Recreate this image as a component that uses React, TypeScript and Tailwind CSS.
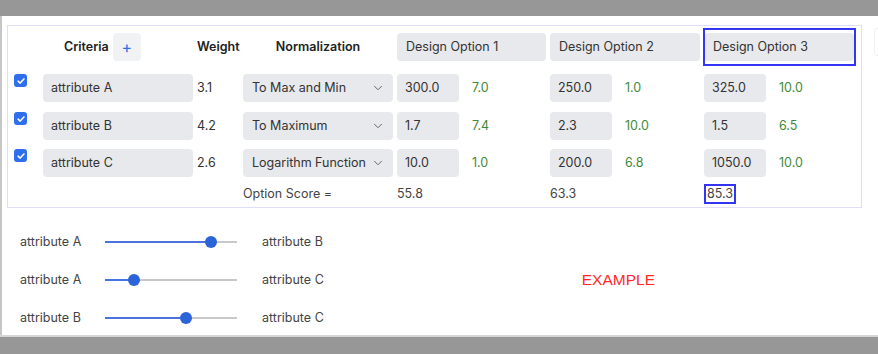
import { ChevronDown } from 'lucide-react'

type Row = {
  name: string
  weight: string
  norm: string
  values: [string, string][]
}

const rows: Row[] = [
  { name: 'attribute A', weight: '3.1', norm: 'To Max and Min', values: [['300.0', '7.0'], ['250.0', '1.0'], ['325.0', '10.0']] },
  { name: 'attribute B', weight: '4.2', norm: 'To Maximum', values: [['1.7', '7.4'], ['2.3', '10.0'], ['1.5', '6.5']] },
  { name: 'attribute C', weight: '2.6', norm: 'Logarithm Function', values: [['10.0', '1.0'], ['200.0', '6.8'], ['1050.0', '10.0']] },
]

// top margin of each row, the reference is not quite even
const rowGap = ['mt-[13px]', 'mt-[10px]', 'mt-[9px]']

const sliders = [
  { left: 'attribute A', right: 'attribute B', pct: 80 },
  { left: 'attribute A', right: 'attribute C', pct: 22 },
  { left: 'attribute B', right: 'attribute C', pct: 61 },
]

function Checkbox() {
  return (
    <span className="flex h-[13px] w-[13px] items-center justify-center rounded-[3px] bg-[#2f6fec]">
      <svg viewBox="0 0 12 12" className="h-[10px] w-[10px]">
        <path d="M2.5 6.2 L5 8.5 L9.5 3.5" fill="none" stroke="white" strokeWidth="1.8" strokeLinecap="round" strokeLinejoin="round" />
      </svg>
    </span>
  )
}

function Slider({ pct }: { pct: number }) {
  return (
    <div className="relative h-[12px] w-[132px]">
      <div className="absolute left-0 right-0 top-[5px] h-[2px] bg-[#c9c9c9]" />
      <div className="absolute left-0 top-[5px] h-[2px] bg-[#4a72da]" style={{ width: `${pct}%` }} />
      <div
        className="absolute top-0 h-[12px] w-[12px] -translate-x-1/2 rounded-full bg-[#2b63d8]"
        style={{ left: `${pct}%` }}
      />
    </div>
  )
}

export default function App() {
  return (
    <div className="flex h-[354px] w-[878px] flex-col bg-[#979797] font-['Inter',sans-serif] text-[12.5px] text-[#333]">
      <div className="h-[16px]" />
      <div className="flex flex-1 overflow-hidden border-l-[2px] border-[#c6c6c6] bg-white">
        <div className="flex flex-1 flex-col">
          <div className="ml-[5px] mt-[9px] flex items-start gap-[12px]">
            <section className="w-[855px] border border-[#dedefa] pb-[3px] pt-[7px]">
              <div className="grid grid-cols-[31px_150px_42px_150px_149px_150px_150px] gap-x-[4px]">
                {/* header */}
                <div />
                <div className="flex h-[28px] items-center gap-[4px] pl-[21px] font-semibold text-[#222]">
                  <span>Criteria</span>
                  <button className="flex h-[28px] w-[28px] items-center justify-center rounded-[4px] bg-[#f1f2f4] text-[16px] font-normal text-[#2f6fec]">
                    +
                  </button>
                </div>
                <div className="flex items-center font-semibold text-[#222]">Weight</div>
                <div className="flex items-center justify-center font-semibold text-[#222]">Normalization</div>
                <div className="flex h-[28px] items-center rounded-[4px] bg-[#e8e9ec] pl-[9px]">Design Option 1</div>
                <div className="flex h-[28px] items-center rounded-[4px] bg-[#e8e9ec] pl-[9px]">Design Option 2</div>
                <div className="relative flex h-[28px] items-center rounded-[4px] bg-[#e8e9ec] pl-[9px]">
                  Design Option 3
                  <span className="absolute -bottom-[5px] -left-[1px] -right-[2px] -top-[5px] border-2 border-[#3434f4]" />
                </div>

                {rows.map((row, r) => (
                  <div key={row.name} className="contents">
                    <div className={`${rowGap[r]} flex pl-[6px]`}>
                      <Checkbox />
                    </div>
                    <div className={`${rowGap[r]} flex h-[28px] items-center rounded-[4px] bg-[#e8e9ec] pl-[8px]`}>{row.name}</div>
                    <div className={`${rowGap[r]} flex items-center`}>{row.weight}</div>
                    <div className={`${rowGap[r]} flex h-[28px] items-center justify-between overflow-hidden rounded-[4px] bg-[#e8e9ec] pl-[9px] pr-[8px]`}>
                      <span className="whitespace-nowrap">{row.norm}</span>
                      <ChevronDown size={14} strokeWidth={1.5} className="ml-[2px] shrink-0 text-[#555]" />
                    </div>
                    {row.values.map(([v, s], i) => (
                      <div key={i} className={`${rowGap[r]} flex items-center gap-[13px]`}>
                        <div className="flex h-[28px] w-[62px] items-center rounded-[4px] bg-[#e8e9ec] pl-[8px]">{v}</div>
                        <span className="text-[#3f8a3a]">{s}</span>
                      </div>
                    ))}
                  </div>
                ))}

                {/* score row */}
                <div />
                <div />
                <div />
                <div className="mt-[7px] flex h-[20px] items-center text-[#444]">Option Score =</div>
                <div className="mt-[7px] flex h-[20px] items-center text-[#444]">55.8</div>
                <div className="mt-[7px] flex h-[20px] items-center text-[#444]">63.3</div>
                <div className="mt-[7px] flex h-[20px]">
                  <span className="flex items-center border-2 border-[#3434f4] px-[1px] text-[#444]">85.3</span>
                </div>
              </div>
            </section>
            <div className="mt-[3px] h-[28px] flex-1 rounded-l-[4px] border border-r-0 border-[#f1f1f1]" />
          </div>

          <div className="mt-[28px] flex">
            <div className="flex flex-col gap-[26px] pl-[18px]">
              {sliders.map((s, i) => (
                <div key={i} className="flex h-[12px] items-center">
                  <span className="w-[85px] text-[#444]">{s.left}</span>
                  <Slider pct={s.pct} />
                  <span className="ml-[25px] text-[#444]">{s.right}</span>
                </div>
              ))}
            </div>
            <div className="ml-[258px] mt-[32px] font-['Liberation_Sans',sans-serif] text-[15.5px] text-[#ff2a2a]">EXAMPLE</div>
          </div>
        </div>
      </div>
      <div className="h-[19px] border-t-[2px] border-[#d6d6d6]" />
    </div>
  )
}
